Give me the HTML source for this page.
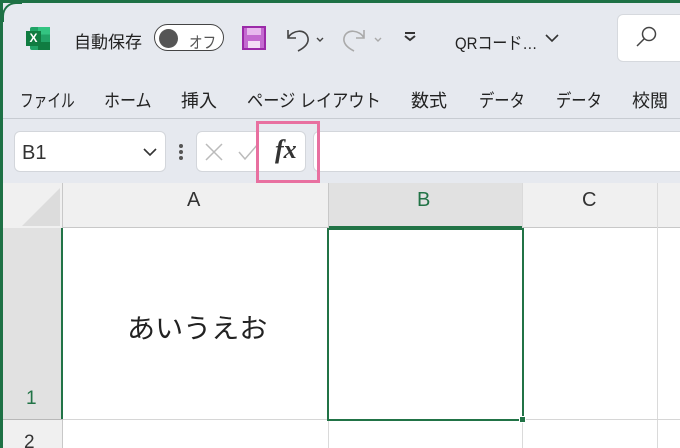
<!DOCTYPE html>
<html><head><meta charset="utf-8"><style>
*{margin:0;padding:0;box-sizing:border-box}
html,body{width:680px;height:448px;overflow:hidden}
body{background:#e6e9ef;font-family:"Liberation Sans","Noto Sans CJK JP",sans-serif;position:relative;color:#222}
.abs{position:absolute}
.t{font-size:18px;white-space:nowrap;transform-origin:0 0}
</style></head><body>
<div class="abs" style="left:0;top:0;width:680px;height:3px;background:#1e7145"></div>
<div class="abs" style="left:0;top:0;width:3px;height:448px;background:#1e7145"></div>
<div class="abs" style="left:2px;top:2px;width:20px;height:20px;border-top-left-radius:14px;border-top:2px solid #1e7145;border-left:2px solid #1e7145;background:#e6e9ef"></div>
<!-- excel icon -->
<div class="abs" style="left:30px;top:27px;width:20px;height:23px;background:#21a366;border-radius:2px"></div>
<div class="abs" style="left:38px;top:27px;width:12px;height:23px;background:linear-gradient(#33c481 0 33%,#21a366 33% 66%,#107c41 66%)"></div>
<div class="abs" style="left:26px;top:31px;width:15px;height:15px;background:#107c41;color:#fff;font-size:12px;font-weight:bold;text-align:center;line-height:15px">X</div>
<div class="abs t" style="left:74px;top:28px;font-size:17px">自動保存</div>
<div class="abs" style="left:154px;top:24px;width:70px;height:27px;border:1.5px solid #444;border-radius:14px;background:#fff"></div>
<div class="abs" style="left:159px;top:29px;width:19px;height:19px;border-radius:50%;background:#555"></div>
<div class="abs t" style="left:189px;top:29px;font-size:16px;color:#555;transform:scaleX(.85)">オフ</div>
<!-- save -->
<div class="abs" style="left:242px;top:26px;width:24px;height:24px;background:#c46ad0;border:2px solid #9b2aa8"></div>
<div class="abs" style="left:247px;top:28px;width:14px;height:7px;background:#e8b8ee"></div>
<div class="abs" style="left:248px;top:41px;width:12px;height:7px;background:#f3ddf5"></div>
<svg class="abs" style="left:282px;top:24px" width="48" height="30"><path d="M6 6v8h8M6 14 C10 6,24 4,26 14 C27 20,22 24,16 27" fill="none" stroke="#444" stroke-width="1.6"/><path d="M35 14l3 3 3-3" fill="none" stroke="#444" stroke-width="1.4"/></svg>
<svg class="abs" style="left:340px;top:24px" width="48" height="30"><path d="M24 6v8h-8M24 14 C20 6,6 4,4 14 C3 20,8 24,14 27" fill="none" stroke="#aaa" stroke-width="1.6"/><path d="M35 14l3 3 3-3" fill="none" stroke="#aaa" stroke-width="1.4"/></svg>
<svg class="abs" style="left:402px;top:30px" width="16" height="14"><path d="M3 3h10" stroke="#333" stroke-width="2"/><path d="M3 6l5 4 5-4" fill="none" stroke="#333" stroke-width="2"/></svg>
<div class="abs t" style="left:455px;top:29px;font-size:17px;transform:scaleX(.88)">QRコード…</div>
<svg class="abs" style="left:544px;top:32px" width="16" height="12"><path d="M2 3l6 6 6-6" fill="none" stroke="#333" stroke-width="1.6"/></svg>
<div class="abs" style="left:617px;top:14px;width:80px;height:48px;background:#fff;border-radius:6px;border:1px solid #d6d9de"></div>
<svg class="abs" style="left:634px;top:24px" width="26" height="26"><circle cx="15" cy="10" r="6.5" fill="none" stroke="#444" stroke-width="1.5"/><path d="M10.5 14.5L3 22" stroke="#444" stroke-width="1.5"/></svg>
<!-- tabs -->
<div class="abs t" style="left:20px;top:87px;transform:scaleX(.76)">ファイル</div>
<div class="abs t" style="left:104px;top:87px;transform:scaleX(.89)">ホーム</div>
<div class="abs t" style="left:181px;top:87px">挿入</div>
<div class="abs t" style="left:247px;top:87px;transform:scaleX(.9)">ページ レイアウト</div>
<div class="abs t" style="left:411px;top:87px">数式</div>
<div class="abs t" style="left:479px;top:87px;transform:scaleX(.85)">データ</div>
<div class="abs t" style="left:556px;top:87px;transform:scaleX(.85)">データ</div>
<div class="abs t" style="left:632px;top:87px">校閲</div>
<div class="abs" style="left:3px;top:118px;width:677px;height:1px;background:#c8ccd2"></div>
<!-- formula bar -->
<div class="abs" style="left:14px;top:131px;width:152px;height:41px;background:#fff;border:1px solid #d3d6db;border-radius:6px"></div>
<div class="abs" style="left:22px;top:142px;font-size:20px;color:#333">B1</div>
<svg class="abs" style="left:142px;top:146px" width="16" height="12"><path d="M2 3l6 6 6-6" fill="none" stroke="#333" stroke-width="1.6"/></svg>
<div class="abs" style="left:179px;top:144px;width:4px;height:4px;background:#555;border-radius:50%;box-shadow:0 6px 0 #555,0 12px 0 #555"></div>
<div class="abs" style="left:196px;top:131px;width:110px;height:41px;background:#fff;border:1px solid #d3d6db;border-radius:6px"></div>
<svg class="abs" style="left:203px;top:141px" width="60" height="22"><path d="M3 3l16 16M19 3L3 19" stroke="#bbb" stroke-width="1.5"/><path d="M36 11l6 7 13-15" fill="none" stroke="#bbb" stroke-width="1.5"/></svg>
<div class="abs" style="left:275px;top:135px;font-family:'Liberation Serif',serif;font-style:italic;font-weight:bold;font-size:26px;color:#333">fx</div>
<div class="abs" style="left:313px;top:131px;width:380px;height:41px;background:#fff;border:1px solid #d3d6db;border-radius:6px"></div>
<div class="abs" style="left:256px;top:121px;width:64px;height:62px;border:3px solid #e870a0"></div>
<!-- grid -->
<div class="abs" style="left:3px;top:183px;width:677px;height:265px;background:#fff"></div>
<div class="abs" style="left:3px;top:183px;width:677px;height:45px;background:#f0f0f0;border-bottom:1px solid #c8c8c8"></div>
<div class="abs" style="left:3px;top:183px;width:60px;height:265px;background:#f0f0f0;border-right:1px solid #c8c8c8"></div>
<svg class="abs" style="left:20px;top:188px" width="40" height="38"><path d="M40 0V38H2Z" fill="#dcdcdc"/></svg>
<div class="abs" style="left:328px;top:183px;width:194px;height:45px;background:#e1e1e1;border-bottom:2px solid #217346"></div>
<div class="abs" style="left:3px;top:228px;width:60px;height:192px;background:#e1e1e1;border-right:2px solid #217346"></div>
<div class="abs" style="left:328px;top:183px;width:1px;height:45px;background:#c8c8c8"></div>
<div class="abs" style="left:522px;top:183px;width:1px;height:265px;background:#dadada"></div>
<div class="abs" style="left:657px;top:183px;width:1px;height:265px;background:#dadada"></div>
<div class="abs" style="left:328px;top:228px;width:1px;height:220px;background:#dadada"></div>
<div class="abs" style="left:3px;top:419px;width:677px;height:1px;background:#d6d6d6"></div>
<div class="abs" style="left:3px;top:419px;width:60px;height:1px;background:#b8b8b8"></div>
<div class="abs t" style="left:187px;top:189px;font-size:20px;color:#333">A</div>
<div class="abs t" style="left:417px;top:189px;font-size:20px;color:#217346">B</div>
<div class="abs t" style="left:582px;top:189px;font-size:20px;color:#333">C</div>
<div class="abs t" style="left:26px;top:388px;font-size:19px;color:#217346">1</div>
<div class="abs t" style="left:24px;top:432px;font-size:19px;color:#333">2</div>
<div class="abs t" style="left:127px;top:307px;font-size:27px;color:#222;transform:scaleX(1.04)">あいうえお</div>
<div class="abs" style="left:327px;top:228px;width:197px;height:193px;border:2px solid #217346"></div>
<div class="abs" style="left:519px;top:416px;width:7px;height:7px;background:#217346;border:1px solid #fff"></div>
</body></html>
